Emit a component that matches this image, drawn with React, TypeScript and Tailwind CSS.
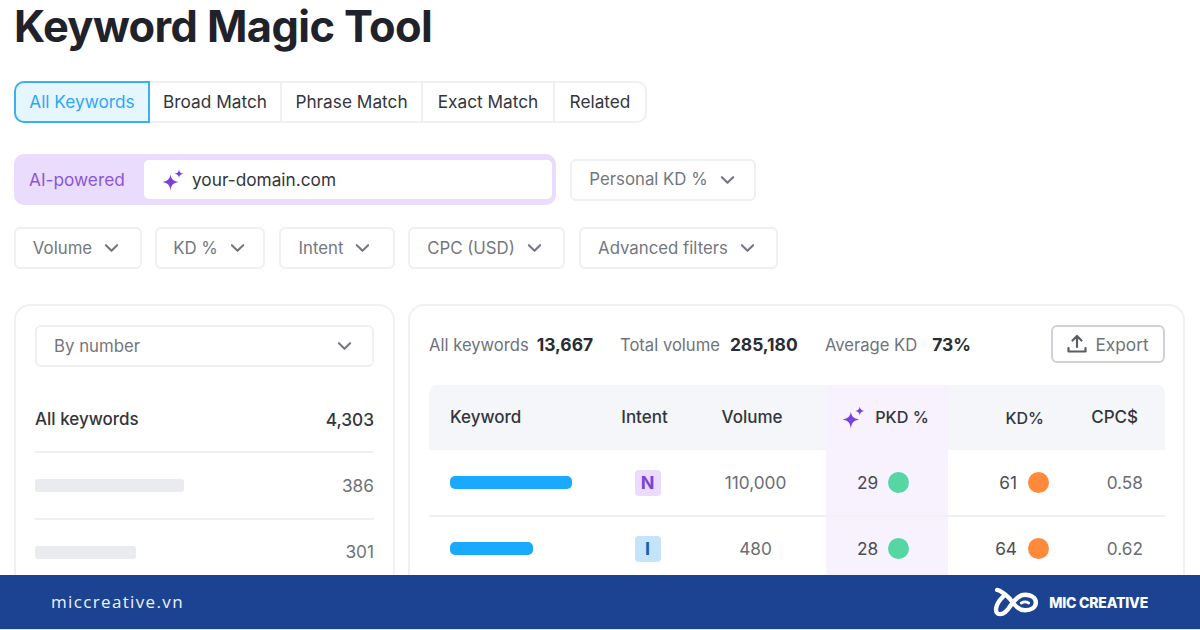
import React from "react";

function Chevron({ className = "" }: { className?: string }) {
  return (
    <svg viewBox="0 0 16 10" className={`w-[15px] h-[10px] shrink-0 ${className}`} fill="none" stroke="#74777f" strokeWidth="2.2" strokeLinecap="round" strokeLinejoin="round">
      <path d="M2 2l6 6 6-6" />
    </svg>
  );
}

function Sparkle({ className = "" }: { className?: string }) {
  return (
    <svg viewBox="0 0 22 22" className={className} fill="#7b3fe0">
      <path d="M8.500 5.500c.7 4.600 2.400 6.300 8 7.500-5.600 1.200-7.300 2.900-8 8.500-.8-5.600-2.500-7.300-8-8.500 5.500-1.200 7.200-2.900 8-7.500z" />
      <path d="M17 0.500c.4 2.700 1.400 3.700 4.500 4.200-3.100.5-4.100 1.500-4.500 4.300-.4-2.800-1.400-3.800-4.500-4.300 3.100-.5 4.100-1.500 4.500-4.200z" />
    </svg>
  );
}

function Dropdown({ label, width }: { label: string; width: string }) {
  return (
    <div className={`${width} gap-[12px] h-[42px] flex items-center justify-center rounded-[6px] border-2 border-[#eff0f2] bg-white text-[16.800px] text-[#74777f]`}>
      <span className="pt-[1px]">{label}</span>
      <Chevron />
    </div>
  );
}

function Tab({ label, width }: { label: string; width: string }) {
  return (
    <div className={`${width} h-full flex items-center justify-center border-r-2 border-[#eff0f2] last:border-r-0 text-[17.250px] text-[#33353d]`}>
      {label}
    </div>
  );
}

function Stat({ label, value, className = "" }: { label: string; value: string; className?: string }) {
  return (
    <div className={`flex items-center pt-[2px] ${className}`}>
      <span className="text-[16.600px] text-[#6f727b]">{label}</span>
      <span className="text-[17.400px] font-bold text-[#2a2c33]">{value}</span>
    </div>
  );
}

function Dot({ color }: { color: string }) {
  return <span className={`w-[21px] h-[21px] rounded-full ${color}`} />;
}

function Row({ bar, badge, badgeClass, volume, pkd, kd, cpc, height, last = false }: { bar: string; badge: string; badgeClass: string; volume: string; pkd: string; kd: string; cpc: string; height: string; last?: boolean }) {
  return (
    <div className={`grid grid-cols-[172px_88px_137px_122px_112px_105px] ${height} text-[17.250px] text-[#6a6d76] ${last ? "" : "border-b-2 border-[#eff0f2]"}`}>
      <div className="flex items-center pl-[21px]">
        <div className={`h-[13px] rounded-[5px] bg-[#19aaff] ${bar}`} />
      </div>
      <div className="flex items-center justify-center pl-[5px]">
        <div className={`w-[26px] h-[26px] rounded-[4px] flex items-center justify-center font-bold text-[18px] ${badgeClass}`}>{badge}</div>
      </div>
      <div className="flex items-center justify-center pr-[4px]">{volume}</div>
      <div className="flex items-center justify-center gap-[10px] bg-[#f7f2fe] pr-[8px] text-[#4a4c55]">
        <span>{pkd}</span>
        <Dot color="bg-[#55d6a3]" />
      </div>
      <div className="flex items-center justify-end gap-[11px] pr-[11px] text-[#4a4c55]">
        <span>{kd}</span>
        <Dot color="bg-[#ff8a3c]" />
      </div>
      <div className="flex items-center justify-end pr-[22px]">{cpc}</div>
    </div>
  );
}

export default function App() {
  return (
    <div className="w-[1200px] h-[630px] flex flex-col overflow-hidden bg-white font-['Inter',sans-serif]">
      <main className="h-[575px] shrink-0 overflow-hidden pl-[14px]">
        <h1 className="h-[54px] mb-[27px] flex items-center text-[43.400px] leading-none font-bold tracking-[-0.6px] text-[#1f222b]">Keyword Magic Tool</h1>

        <div className="flex h-[42px] w-[633px] rounded-[10px] border-2 border-l-0 border-[#eff0f2] bg-white">
          <div className="-my-[2px] w-[136px] h-[42px] flex items-center justify-center rounded-l-[10px] border-2 border-[#3ab0f0] bg-[#e6f6fe] text-[17.250px] text-[#2ba8f4]">All Keywords</div>
          <Tab label="Broad Match" width="w-[132px]" />
          <Tab label="Phrase Match" width="w-[141px]" />
          <Tab label="Exact Match" width="w-[132px]" />
          <Tab label="Related" width="w-[90px]" />
        </div>

        <div className="mt-[31px] flex items-center gap-[14px] h-[51px]">
          <div className="w-[542px] h-[51px] rounded-[10px] bg-[#eadcfd] flex items-center pr-[4px]">
            <span className="w-[130px] pl-[15px] text-[17.250px] text-[#8a55d8]">AI-powered</span>
            <div className="flex-1 h-[39px] rounded-[5px] bg-white flex items-center gap-[8px] pl-[18px] text-[17.250px] text-[#33353d]">
              <Sparkle className="w-[22px] h-[22px]" />
              <span>your-domain.com</span>
            </div>
          </div>
          <Dropdown label="Personal KD %" width="w-[186px] pr-[2px]" />
        </div>

        <div className="mt-[22px] flex items-center h-[42px]">
          <Dropdown label="Volume" width="w-[128px] mr-[13px] pr-[4px]" />
          <Dropdown label="KD %" width="w-[110px] mr-[14px] pr-[2px]" />
          <Dropdown label="Intent" width="w-[116px] mr-[13px] pr-[5px]" />
          <Dropdown label="CPC (USD)" width="w-[157px] mr-[14px] pr-[4px]" />
          <Dropdown label="Advanced filters" width="w-[199px] pr-[4px]" />
        </div>

        <div className="mt-[35px] flex gap-[13px] items-start">
          <section className="w-[381px] h-[300px] shrink-0 rounded-[16px] border-2 border-[#f0f1f3] px-[19px] pt-[19px]">
            <div className="h-[42px] rounded-[6px] border-2 border-[#eff0f2] flex items-center justify-between pl-[17px] pr-[20px] text-[16.800px] text-[#74777f]">
              <span className="pt-[2px]">By number</span>
              <Chevron />
            </div>
            <div className="h-[86px] flex items-center justify-between border-b-2 border-[#eff0f2] pt-[22px] text-[17px] font-medium text-[#33353d]">
              <span>All keywords</span>
              <span className="text-[17.250px]">4,303</span>
            </div>
            <div className="h-[67px] flex items-center justify-between border-b-2 border-[#eff0f2] text-[17.250px] text-[#6f727b]">
              <div className="w-[149px] h-[13px] rounded-[3px] bg-[#eaebee]" />
              <span>386</span>
            </div>
            <div className="h-[64px] flex items-center justify-between text-[17.250px] text-[#6f727b]">
              <div className="w-[101px] h-[13px] rounded-[3px] bg-[#eaebee]" />
              <span>301</span>
            </div>
          </section>

          <section className="w-[777px] h-[300px] shrink-0 rounded-[16px] border-2 border-[#f0f1f3] pl-[19px] pr-[18px] pt-[19px]">
            <div className="h-[38px] flex items-center">
              <Stat label="All keywords" value="13,667" className="w-[191px] gap-[8px]" />
              <Stat label="Total volume" value="285,180" className="w-[205px] gap-[10px]" />
              <Stat label="Average KD" value="73%" className="gap-[15px]" />
              <div className="ml-auto w-[114px] h-[38px] rounded-[6px] border-2 border-[#cfd1d6] flex items-center justify-center gap-[8px] text-[17.250px] text-[#6f727b]">
                <svg viewBox="0 0 20 20" className="w-[20px] h-[20px]" fill="none" stroke="#5a5d66" strokeWidth="2.200" strokeLinecap="round" strokeLinejoin="round">
                  <path d="M10 13V2.500M5.500 6.500L10 2l4.500 4.500M1.500 14v3.500h17V14" />
                </svg>
                <span className="pt-[2px]">Export</span>
              </div>
            </div>

            <div className="mt-[22px] w-[736px]">
              <div className="grid grid-cols-[172px_88px_137px_122px_112px_105px] h-[65px] rounded-t-[8px] bg-[#f4f6f9] text-[17px] font-medium text-[#33353d]">
                <div className="flex items-center pl-[21px]">Keyword</div>
                <div className="flex items-center justify-center pr-[1px]">Intent</div>
                <div className="flex items-center justify-center pr-[11px]">Volume</div>
                <div className="flex items-center justify-center gap-[10px] bg-[#f7f2fe] pr-[3px] text-[16.200px]">
                  <Sparkle className="w-[23px] h-[23px]" />
                  <span>PKD %</span>
                </div>
                <div className="flex items-center justify-end pr-[16px] text-[16px]">KD%</div>
                <div className="flex items-center justify-end pr-[27px]">CPC$</div>
              </div>
              <Row height="h-[67px]" bar="w-[122px]" badge="N" badgeClass="bg-[#ebdcfd] text-[#7a45d6]" volume="110,000" pkd="29" kd="61" cpc="0.58" />
              <Row height="h-[63px]" bar="w-[83px]" badge="I" badgeClass="bg-[#c4e4fb] text-[#0f62ad]" volume="480" pkd="28" kd="64" cpc="0.62" last />
            </div>
          </section>
        </div>
      </main>

      <footer className="h-[54px] shrink-0 bg-[#1c4392] flex items-center justify-between pl-[51px] pr-[52px]">
        <span className="text-[17px] tracking-[1.350px] text-[#eef3fb] font-['Open_Sans',sans-serif]">miccreative.vn</span>
        <div className="flex items-center gap-[10px]">
          <svg viewBox="0 0 47 32" className="w-[46px] h-[31px]" fill="none" stroke="#ffffff" strokeWidth="4.500" strokeLinecap="round" strokeLinejoin="round">
            <path d="M4 3C9 4 13 8 17 12C21 17 25 24 33 24C39 24 44 21 44 16C44 11 39 8 33 8C26 8 22 14 18 19C15 24 11 28 7 28C4 28 2.500 26 3 22C3.500 18 6 14 10 10" />
            <path d="M29 16.500c2.500-1.500 5-1.500 7.500 0" strokeWidth="3" />
          </svg>
          <span className="text-[14px] font-extrabold tracking-[-0.2px] text-white">MIC CREATIVE</span>
        </div>
      </footer>
      <div className="h-px shrink-0 bg-[#dfe6f3]" />
    </div>
  );
}
